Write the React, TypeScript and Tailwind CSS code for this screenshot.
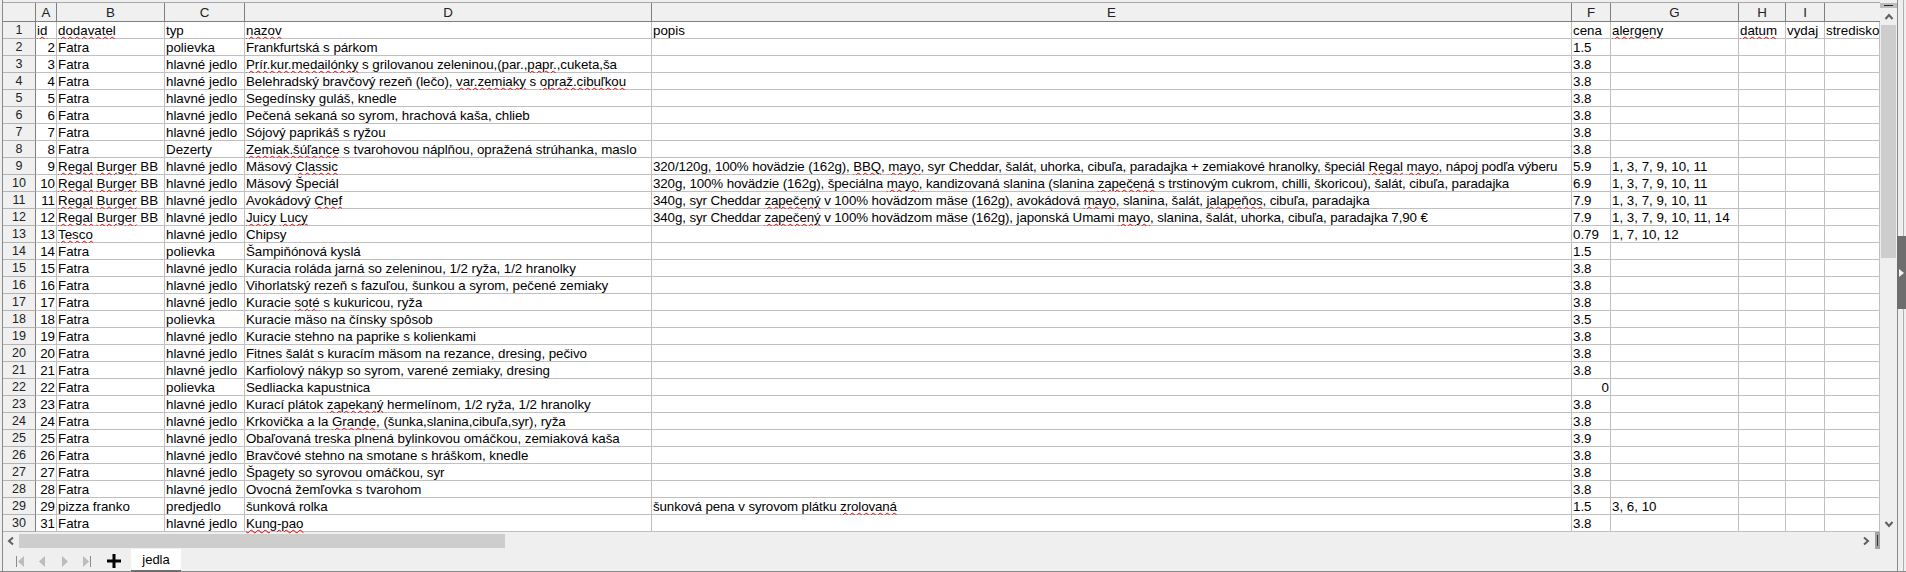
import React from 'react';

// ~word~ marks a word the spell checker flagged
const rows: [string, string, string, string, string, string, string][] = [
  ['2', 'Fatra', 'polievka', 'Frankfurtská s párkom', '', '1.5', ''],
  ['3', 'Fatra', 'hlavné jedlo', '~Prír.kur.medailónky~ s grilovanou zeleninou,(par.,~papr.~,cuketa,ša', '', '3.8', ''],
  ['4', 'Fatra', 'hlavné jedlo', 'Belehradský bravčový rezeň (lečo), ~var.zemiaky~ s ~opraž.cibuľkou~', '', '3.8', ''],
  ['5', 'Fatra', 'hlavné jedlo', 'Segedínsky guláš, knedle', '', '3.8', ''],
  ['6', 'Fatra', 'hlavné jedlo', 'Pečená sekaná so syrom, hrachová kaša, chlieb', '', '3.8', ''],
  ['7', 'Fatra', 'hlavné jedlo', 'Sójový paprikáš s ryžou', '', '3.8', ''],
  ['8', 'Fatra', 'Dezerty', '~Zemiak.šúľance~ s tvarohovou náplňou, opražená strúhanka, maslo', '', '3.8', ''],
  ['9', '~Regal~ ~Burger~ BB', 'hlavné jedlo', 'Mäsový ~Classic~', '320/120g, 100% hovädzie (162g), ~BBQ~, ~mayo~, syr Cheddar, šalát, uhorka, cibuľa, paradajka + zemiakové hranolky, špeciál ~Regal~ ~mayo~, nápoj podľa výberu', '5.9', '1, 3, 7, 9, 10, 11'],
  ['10', '~Regal~ ~Burger~ BB', 'hlavné jedlo', 'Mäsový Špeciál', '320g, 100% hovädzie (162g), špeciálna ~mayo~, kandizovaná slanina (slanina ~zapečená~ s trstinovým cukrom, chilli, škoricou), šalát, cibuľa, paradajka', '6.9', '1, 3, 7, 9, 10, 11'],
  ['11', '~Regal~ ~Burger~ BB', 'hlavné jedlo', 'Avokádový ~Chef~', '340g, syr Cheddar ~zapečený~ v 100% hovädzom mäse (162g), avokádová ~mayo~, slanina, šalát, ~jalapeňos~, cibuľa, paradajka', '7.9', '1, 3, 7, 9, 10, 11'],
  ['12', '~Regal~ ~Burger~ BB', 'hlavné jedlo', '~Juicy~ ~Lucy~', '340g, syr Cheddar ~zapečený~ v 100% hovädzom mäse (162g), japonská Umami ~mayo~, slanina, šalát, uhorka, cibuľa, paradajka 7,90 €', '7.9', '1, 3, 7, 9, 10, 11, 14'],
  ['13', '~Tesco~', 'hlavné jedlo', 'Chipsy', '', '0.79', '1, 7, 10, 12'],
  ['14', 'Fatra', 'polievka', 'Šampiňónová kyslá', '', '1.5', ''],
  ['15', 'Fatra', 'hlavné jedlo', 'Kuracia roláda jarná so zeleninou, 1/2 ryža, 1/2 hranolky', '', '3.8', ''],
  ['16', 'Fatra', 'hlavné jedlo', 'Vihorlatský rezeň s fazuľou, šunkou a syrom, pečené zemiaky', '', '3.8', ''],
  ['17', 'Fatra', 'hlavné jedlo', 'Kuracie ~soté~ s kukuricou, ryža', '', '3.8', ''],
  ['18', 'Fatra', 'polievka', 'Kuracie mäso na čínsky spôsob', '', '3.5', ''],
  ['19', 'Fatra', 'hlavné jedlo', 'Kuracie stehno na paprike s kolienkami', '', '3.8', ''],
  ['20', 'Fatra', 'hlavné jedlo', 'Fitnes šalát s kuracím mäsom na rezance, dresing, pečivo', '', '3.8', ''],
  ['21', 'Fatra', 'hlavné jedlo', 'Karfiolový nákyp so syrom, varené zemiaky, dresing', '', '3.8', ''],
  ['22', 'Fatra', 'polievka', 'Sedliacka kapustnica', '', '0', ''],
  ['23', 'Fatra', 'hlavné jedlo', 'Kurací plátok ~zapekaný~ hermelínom, 1/2 ryža, 1/2 hranolky', '', '3.8', ''],
  ['24', 'Fatra', 'hlavné jedlo', 'Krkovička a la ~Grande~, (šunka,slanina,cibuľa,syr), ryža', '', '3.8', ''],
  ['25', 'Fatra', 'hlavné jedlo', 'Obaľovaná treska plnená bylinkovou omáčkou, zemiaková kaša', '', '3.9', ''],
  ['26', 'Fatra', 'hlavné jedlo', 'Bravčové stehno na smotane s hráškom, knedle', '', '3.8', ''],
  ['27', 'Fatra', 'hlavné jedlo', 'Špagety so syrovou omáčkou, syr', '', '3.8', ''],
  ['28', 'Fatra', 'hlavné jedlo', 'Ovocná žemľovka s tvarohom', '', '3.8', ''],
  ['29', 'pizza franko', 'predjedlo', 'šunková rolka', 'šunková pena v syrovom plátku ~zrolovaná~', '1.5', '3, 6, 10'],
  ['31', 'Fatra', 'hlavné jedlo', '~Kung-pao~', '', '3.8', ''],
];

const columns = ['A', 'B', 'C', 'D', 'E', 'F', 'G', 'H', 'I', ''];
const titles = ['~id~', '~dodavatel~', 'typ', '~nazov~', 'popis', 'cena', '~alergeny~', '~datum~', 'vydaj', 'stredisko'];

const Spell = ({ text }: { text: string }) => (
  <>
    {text.split('~').map((part, i) =>
      i % 2 === 1 ? (
        <span key={i} className="underline decoration-wavy decoration-[#f00000] decoration-1 underline-offset-[1px]">
          {part}
        </span>
      ) : (
        part
      ),
    )}
  </>
);

const Cell = ({ text = '', right = false, tight = '' }: { text?: string; right?: boolean; tight?: string }) => (
  <div
    className={`h-[17px] border-r border-b border-[#c0c0c0] bg-white leading-[17px] whitespace-nowrap ${tight} ${
      right ? 'pr-px text-right' : 'pl-px'
    }`}
  >
    <Spell text={text} />
  </div>
);

const RowHead = ({ n }: { n: number }) => (
  <div className="h-[17px] border-r border-b border-r-[#7f7f7f] border-b-[#b4b4b4] bg-[#f0f0f0] text-center text-[12.5px] leading-[17px] text-[#222]">
    {n}
  </div>
);

const Chevron = ({ d }: { d: string }) => (
  <svg width="10" height="10" viewBox="0 0 10 10" className="shrink-0">
    <path d={d} fill="none" stroke="#5f5f5f" strokeWidth="2" />
  </svg>
);

const NavIcon = ({ d, bar }: { d: string; bar?: number }) => (
  <svg width="9" height="11" viewBox="0 0 9 11" className="shrink-0">
    <path d={d} fill="#bcbcbc" />
    {bar !== undefined && <rect x={bar} y="0" width="1" height="11" fill="#8c8c8c" />}
  </svg>
);

export default function App() {
  return (
    <div className="flex h-[572px] w-[1906px] overflow-hidden bg-[#efefef] font-['Liberation_Sans',Arial,sans-serif] text-[13.33px] text-black">
      <div className="flex w-[1880px] shrink-0 flex-col border-b border-[#8a8a8a]">
        <div className="ml-[2px] flex flex-1 flex-col border-l border-[#8a8a8a]">
          {/* sheet grid */}
          <div className="mt-[2px] border-t border-[#a8a8a8]">
            <div className="grid grid-cols-[33px_21px_108px_80px_407px_920px_39px_128px_47px_39px_55px]">
              <div className="h-[19px] border-r border-b border-r-[#7f7f7f] border-b-[#7f7f7f] bg-[#f0f0f0]" />
              {columns.map((c, i) => (
                <div
                  key={i}
                  className={`h-[19px] border-b border-b-[#7f7f7f] bg-[#f0f0f0] text-center leading-[19px] text-[#222] ${
                    c ? 'border-r border-r-[#7f7f7f]' : ''
                  }`}
                >
                  {c}
                </div>
              ))}

              <RowHead n={1} />
              {titles.map((t) => (
                <Cell key={t} text={t} />
              ))}

              {rows.map((r, i) => (
                <React.Fragment key={r[0]}>
                  <RowHead n={i + 2} />
                  <Cell text={r[0]} right />
                  <Cell text={r[1]} />
                  <Cell text={r[2]} />
                  <Cell text={r[3]} tight="tracking-[-0.05px]" />
                  <Cell text={r[4]} tight="tracking-[-0.11px]" />
                  <Cell text={r[5]} right={r[5] === '0'} />
                  <Cell text={r[6]} />
                  <Cell />
                  <Cell />
                  <Cell />
                </React.Fragment>
              ))}
            </div>
          </div>

          {/* horizontal scrollbar */}
          <div className="flex h-[17px] items-center">
            <div className="flex w-[16px] justify-center">
              <Chevron d="M7 1.5 L3 5 L7 8.5" />
            </div>
            <div className="mt-px h-[14px] w-[486px] bg-[#cdcdcd]" />
            <div className="flex-1" />
            <Chevron d="M3 1.5 L7 5 L3 8.5" />
            <div className="ml-[4px] flex h-[17px] w-[5px] items-center justify-center bg-[#a3a3a3]">
              <div className="h-[11px] w-px bg-[#333]" />
            </div>
          </div>

          {/* sheet tabs */}
          <div className="flex flex-1 items-center">
            <div className="ml-[13px] flex items-center gap-[13px]">
              <NavIcon d="M8 0 V11 L2 5.5 Z" bar={0} />
              <NavIcon d="M7 0 V11 L1 5.5 Z" />
              <NavIcon d="M2 0 V11 L8 5.5 Z" />
              <NavIcon d="M1 0 V11 L7 5.5 Z" bar={8} />
            </div>
            <svg width="14" height="14" viewBox="0 0 14 14" className="ml-[16px] shrink-0">
              <path d="M7 0 V14 M0 7 H14" stroke="#000" strokeWidth="3" />
            </svg>
            <div className="ml-[10px] h-full w-[50px] border-b-[3px] border-[#6e6e6e] bg-white text-center text-[13px] leading-[21px]">
              jedla
            </div>
          </div>
        </div>
      </div>

      {/* vertical scrollbar */}
      <div className="flex w-[17px] shrink-0 flex-col items-center border-b border-[#8a8a8a]">
        <div className="mt-[3px] flex h-[5px] w-full items-center justify-center bg-[#bdbdbd]">
          <div className="h-px w-[9px] bg-[#222]" />
        </div>
        <div className="mt-[4px]">
          <Chevron d="M1.5 7 L5 3 L8.5 7" />
        </div>
        <div className="mt-[3px] h-[233px] w-[15px] bg-[#cdcdcd]" />
        <div className="mt-[261px]">
          <Chevron d="M1.5 3 L5 7 L8.5 3" />
        </div>
      </div>

      {/* collapsed sidebar */}
      <div className="relative flex-1 border-b border-l border-[#8a8a8a]">
        <div className="h-full w-[6px] border-r border-[#b0b0b0]" />
        <div className="absolute top-[236px] -left-px flex h-[73px] w-[9px] items-center bg-[#6e6e6e] pl-[2px]">
          <svg width="5" height="8" viewBox="0 0 5 8">
            <path d="M0 0 L5 4 L0 8 Z" fill="#f4f4f4" />
          </svg>
        </div>
      </div>
    </div>
  );
}
